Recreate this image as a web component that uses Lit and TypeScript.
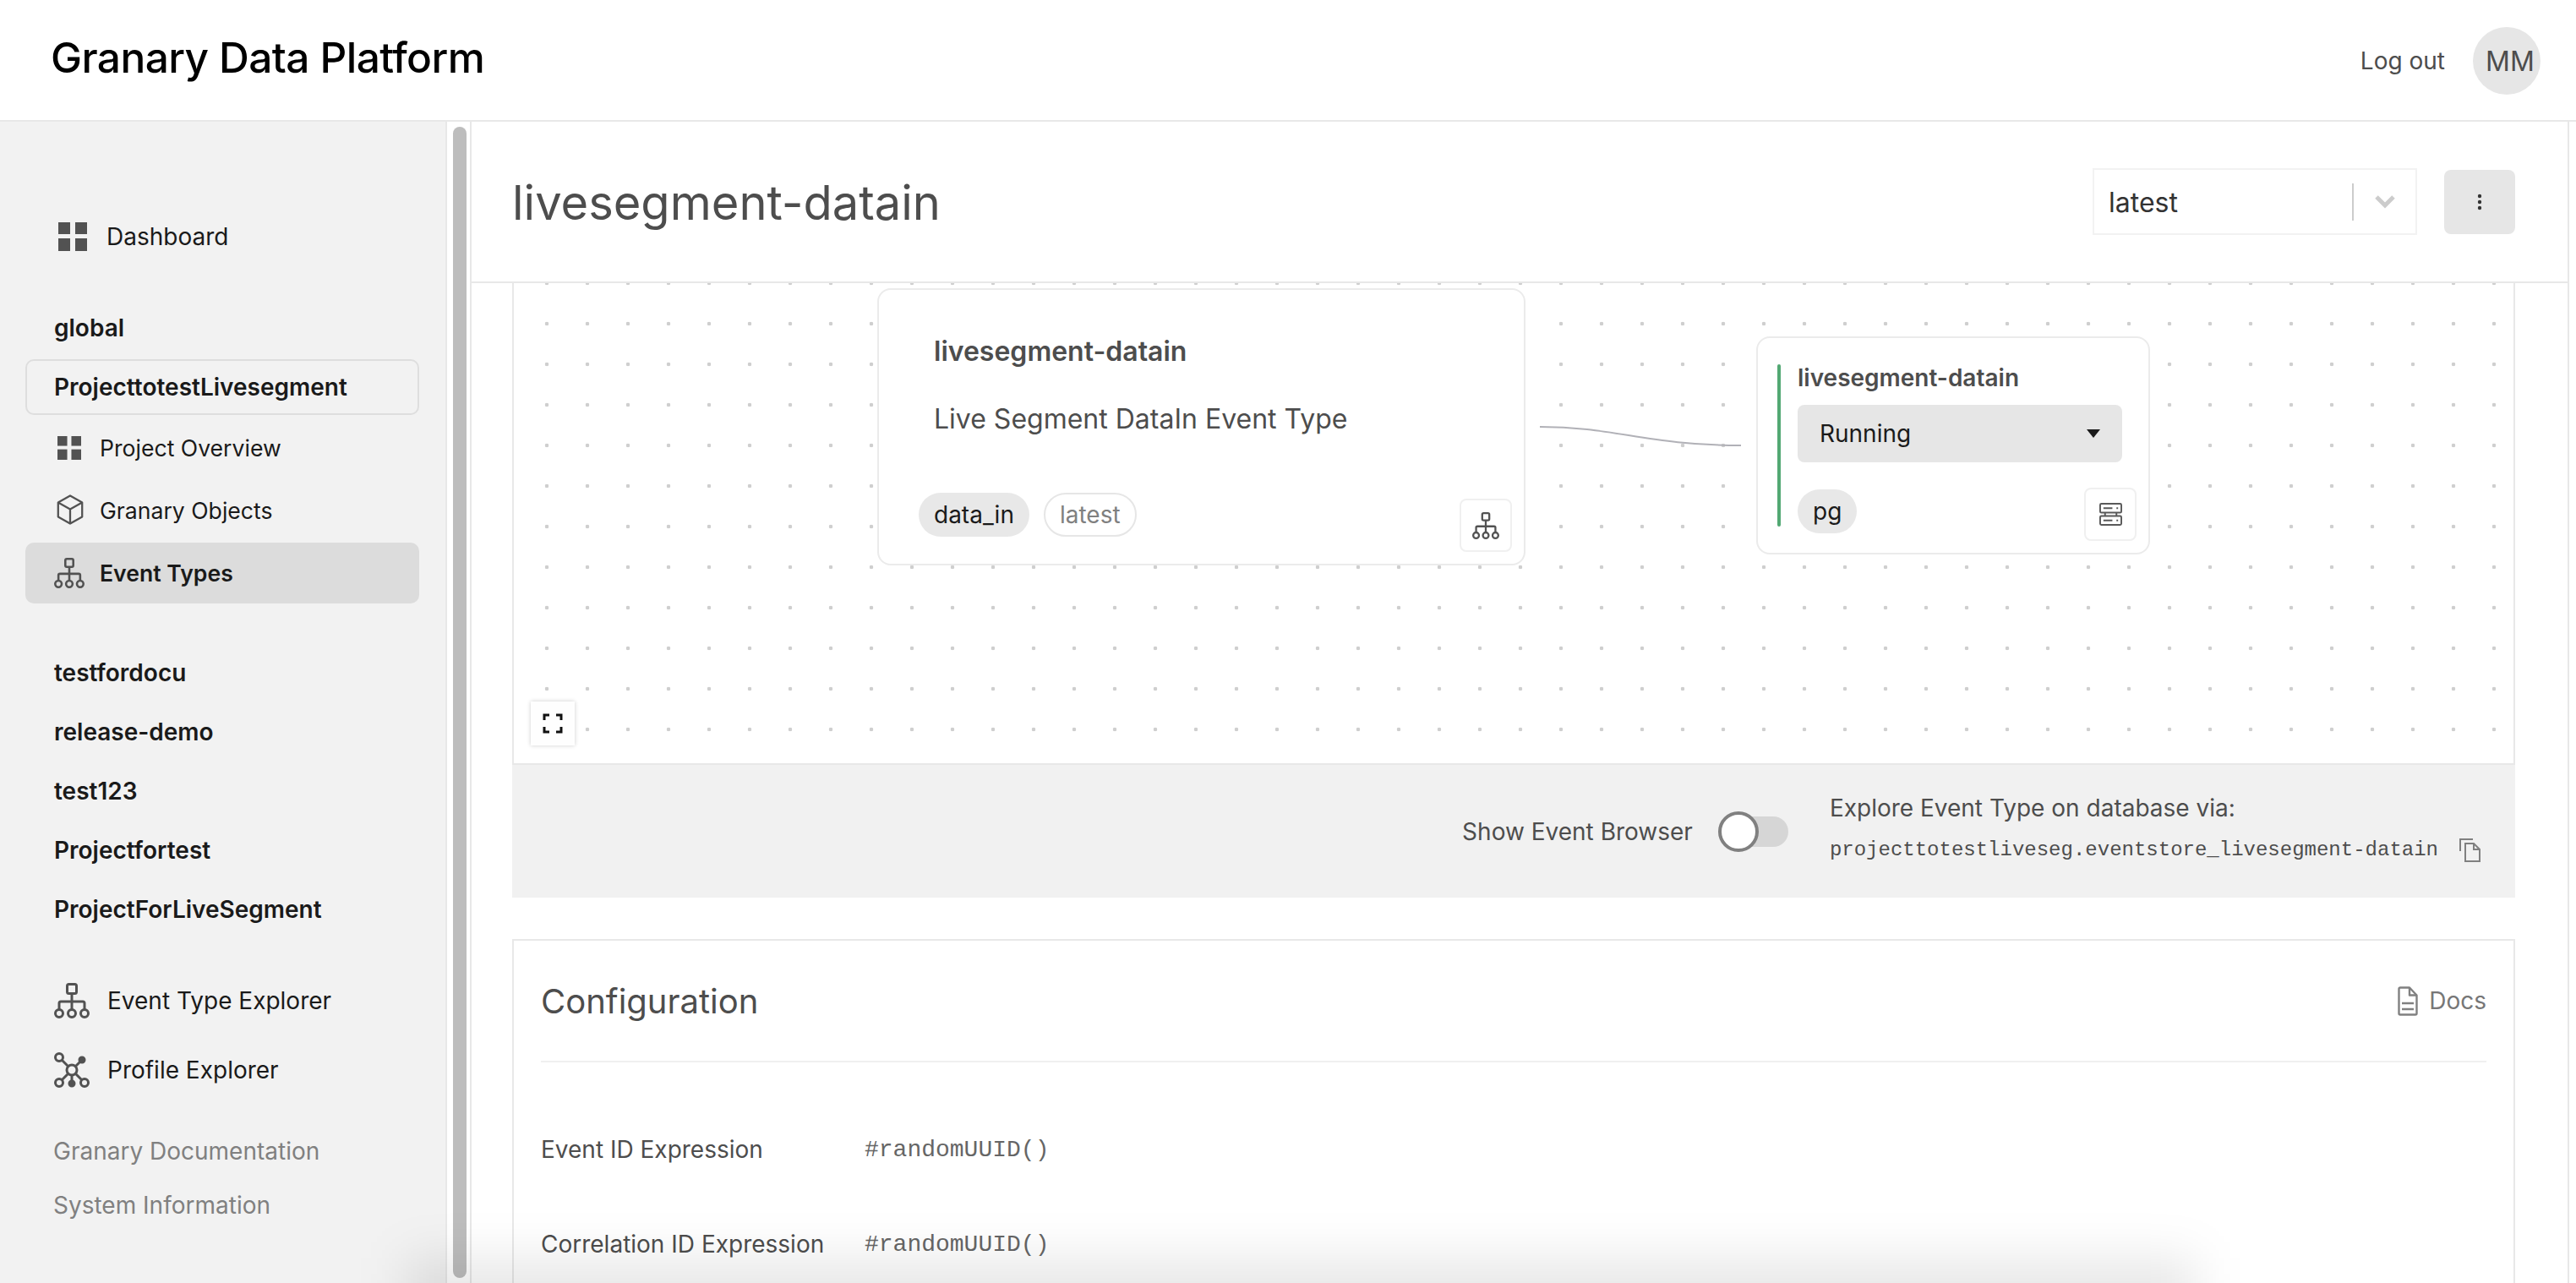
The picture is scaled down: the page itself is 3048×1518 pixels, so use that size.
import { LitElement, html, css } from 'lit';
import { customElement } from 'lit/decorators.js';

const gridIcon = html`<svg viewBox="0 0 34 34" fill="#525252"><rect x="0" y="0" width="14" height="14" /><rect x="20" y="0" width="14" height="14" /><rect x="0" y="19" width="14" height="15" /><rect x="20" y="19" width="14" height="15" /></svg>`;

const boxIcon = html`<svg viewBox="0 0 34 38" fill="none" stroke="#525252" stroke-width="2.4" stroke-linejoin="round"><path d="M17 1.500 32 10v18l-15 8.500L2 28V10z" /><path d="M2 10l15 8.500L32 10M17 18.500v18" /></svg>`;

const treeIcon = html`<svg viewBox="0 0 42 42" fill="none" stroke="#525252" stroke-width="3"><rect x="15.500" y="1.500" width="11" height="11" rx="2" /><path d="M21 13v18M6 31v-7a2 2 0 0 1 2-2h26a2 2 0 0 1 2 2v7" /><circle cx="6" cy="36" r="4.500" /><circle cx="21" cy="36" r="4.500" /><circle cx="36" cy="36" r="4.500" /></svg>`;

const profileIcon = html`<svg viewBox="0 0 42 42" fill="none" stroke="#525252" stroke-width="3"><circle cx="21" cy="21" r="6" /><circle cx="6" cy="6" r="4.500" /><circle cx="6" cy="36" r="4.500" /><circle cx="36" cy="36" r="4.500" /><circle cx="33" cy="9" r="3" fill="#525252" /><circle cx="21" cy="37" r="3" fill="#525252" /><path d="M9 9l8 8M17 25l-8 8M25 25l8 8M25 17l6-6M21 27v7" /></svg>`;

const serverIcon = html`<svg viewBox="0 0 28 28" fill="none" stroke="#595959" stroke-width="2"><rect x="1" y="1" width="26" height="11" rx="1.500" /><rect x="1" y="16" width="26" height="11" rx="1.500" /><path d="M7 12v4M21 12v4M5 6.500h11M5 21.500h11M21 6.500h2M21 21.500h2" /></svg>`;

const copyIcon = html`<svg viewBox="0 0 25 28" fill="none" stroke="#808080" stroke-width="2"><path d="M1 15V1h15" /><path d="M7 6h10l7 7v14H7z" /><path d="M17 6v7h7" /></svg>`;

const docIcon = html`<svg viewBox="0 0 24 35" fill="none" stroke="#808080" stroke-width="2.400" stroke-linejoin="round"><path d="M1.500 3a1.500 1.500 0 0 1 1.500-1.500h11l8.500 9V32a1.500 1.500 0 0 1-1.500 1.500H3A1.500 1.500 0 0 1 1.500 32z" /><path d="M14 1.500v9h8.500M5 20h14M5 27h14" /></svg>`;

@customElement('app-root')
export class AppRoot extends LitElement {
  static styles = css`
    :host {
      display: block;
      height: 1518px;
      overflow: hidden;
      position: relative;
      background: #fff;
      font-family: Inter, 'Liberation Sans', sans-serif;
      font-size: 28px;
      color: #1a1a1a;
    }
    svg {
      display: block;
    }
    .topbar {
      height: 144px;
      box-sizing: border-box;
      border-bottom: 2px solid #e8e8e8;
      display: flex;
      align-items: center;
      padding: 2px 42px 0 60px;
    }
    .brand {
      flex: 1;
      font-size: 49.6px;
      font-weight: 500;
      color: #000;
      letter-spacing: -0.6px;
      padding-bottom: 8px;
    }
    .logout {
      color: #4d4d4d;
      margin-right: 33px;
    }
    .avatar {
      width: 80px;
      height: 80px;
      border-radius: 50%;
      background: #e6e6e6;
      color: #4d4d4d;
      font-size: 32px;
      display: flex;
      align-items: center;
      justify-content: center;
      white-space: nowrap;
    }
    .avatar span {
      margin-left: 8px;
    }
    .body {
      display: flex;
      height: 1374px;
    }
    .side {
      width: 529px;
      flex: none;
      box-sizing: border-box;
      background: #f2f2f2;
      border-right: 2px solid #e8e8e8;
      padding: 118px 31px 0 30px;
    }
    .gutter {
      width: 29px;
      flex: none;
      box-sizing: border-box;
      padding: 6px 4px 6px 7px;
      border-right: 2px solid #e8e8e8;
    }
    .thumb {
      height: 100%;
      border-radius: 8px;
      background: #bdbdbd;
    }
    .row {
      display: flex;
      align-items: center;
    }
    .top-link {
      height: 36px;
      gap: 23px;
      padding-left: 39px;
    }
    .top-link svg {
      width: 34px;
      height: 34px;
    }
    .explorer {
      height: 46px;
      gap: 21px;
      padding-left: 34px;
    }
    .explorer svg {
      width: 42px;
      height: 42px;
    }
    .project {
      height: 36px;
      line-height: 36px;
      padding-left: 34px;
      font-weight: 600;
    }
    .selected {
      height: 66px;
      line-height: 62px;
      box-sizing: border-box;
      border: 2px solid #dedede;
      border-radius: 10px;
      padding-left: 32px;
      margin: 19px 0 4px;
    }
    .sub {
      height: 72px;
      gap: 18px;
      padding-left: 34px;
      margin-bottom: 2px;
      border-radius: 10px;
      font-size: 26.6px;
    }
    .sub svg {
      width: 36px;
      height: 36px;
    }
    .sub .grid {
      width: 28px;
      height: 28px;
      margin: 0 4px;
    }
    .sub .grid svg {
      width: 28px;
      height: 28px;
    }
    .sub .box {
      width: 34px;
      height: 38px;
      margin: 0 1px;
    }
    .sub.active {
      background: #dcdcdc;
      font-weight: 600;
    }
    .footer-link {
      color: #808080;
      height: 64px;
      line-height: 64px;
      padding-left: 33px;
    }
    .main {
      flex: 1;
      min-width: 0;
      padding-right: 8px;
    }
    .main-inner {
      border-right: 2px solid #e8e8e8;
      height: 100%;
    }
    .page-head {
      height: 191px;
      box-sizing: border-box;
      border-bottom: 2px solid #e8e8e8;
      display: flex;
      align-items: center;
      padding: 0 62px 0 48px;
    }
    .page-title {
      flex: 1;
      font-size: 56px;
      color: #4d4d4d;
      padding-top: 2px;
    }
    .select {
      width: 384px;
      height: 79px;
      box-sizing: border-box;
      border: 2px solid #f2f2f2;
      display: flex;
      align-items: center;
      padding-left: 17px;
      font-size: 32px;
      color: #333;
    }
    .select span {
      flex: 1;
      padding-top: 2px;
    }
    .select i {
      width: 2px;
      height: 44px;
      background: #ccc;
      margin-right: 25px;
    }
    .select svg {
      width: 24px;
      height: 16px;
      margin-right: 24px;
    }
    .more {
      width: 84px;
      height: 76px;
      margin-left: 32px;
      border-radius: 8px;
      background: #e6e6e6;
      display: flex;
      align-items: center;
      justify-content: center;
    }
    .more svg {
      width: 6px;
      height: 20px;
    }
    .content {
      padding: 0 62px 0 48px;
    }
    .canvas {
      position: relative;
      height: 570px;
      box-sizing: border-box;
      border: solid #e8e8e8;
      border-width: 0 2px 2px;
      background-color: #fff;
      background-image: radial-gradient(circle, #cfcfcf 2px, transparent 2.6px);
      background-size: 48px 48px;
      background-position: 15px 24px;
    }
    .node {
      position: absolute;
      box-sizing: border-box;
      background: #fff;
      border: 2px solid #ebebeb;
      border-radius: 16px;
    }
    .type-node {
      left: 430px;
      top: 6px;
      width: 767px;
      height: 328px;
      padding: 55px 65px 0 65px;
      color: #4d4d4d;
    }
    .node-title {
      font-weight: 600;
      font-size: 32px;
      line-height: 36px;
    }
    .node-sub {
      font-size: 32px;
      line-height: 40px;
      margin-top: 42px;
    }
    .chips {
      position: absolute;
      left: 47px;
      bottom: 32px;
      display: flex;
      gap: 17px;
    }
    .chip {
      height: 52px;
      line-height: 52px;
      padding: 0 18px;
      box-sizing: border-box;
      border-radius: 26px;
      background: #e8e8e8;
      color: #1a1a1a;
    }
    .chip.outline {
      background: #fff;
      border: 2px solid #e6e6e6;
      line-height: 48px;
      color: #808080;
      padding: 0 17px;
    }
    .node-action {
      position: absolute;
      box-sizing: border-box;
      width: 62px;
      height: 63px;
      border: 2px solid #f0f0f0;
      border-radius: 8px;
      display: flex;
      align-items: center;
      justify-content: center;
    }
    .type-node .node-action {
      right: 14px;
      bottom: 14px;
    }
    .type-node .node-action svg {
      width: 32px;
      height: 34px;
    }
    .store-node {
      left: 1470px;
      top: 63px;
      width: 466px;
      height: 258px;
      padding: 29px 31px 0 47px;
      color: #4d4d4d;
    }
    .store-node::before {
      content: '';
      position: absolute;
      left: 23px;
      top: 31px;
      width: 4px;
      height: 192px;
      border-radius: 2px;
      background: #52a873;
    }
    .store-title {
      font-weight: 600;
      font-size: 28px;
      line-height: 36px;
    }
    .status {
      height: 68px;
      margin-top: 14px;
      padding: 0 26px;
      border-radius: 8px;
      background: #e6e6e6;
      color: #1a1a1a;
      display: flex;
      align-items: center;
      justify-content: space-between;
    }
    .status svg {
      width: 16px;
      height: 10px;
    }
    .store-node .chip {
      position: absolute;
      left: 47px;
      bottom: 23px;
      padding: 0 18px;
    }
    .store-node .node-action {
      right: 14px;
      bottom: 14px;
    }
    .store-node .node-action svg {
      width: 27px;
      height: 27px;
    }
    .edge {
      position: absolute;
      left: 1212px;
      top: 165px;
      width: 245px;
      height: 30px;
      fill: none;
      stroke: #b1b1b7;
      stroke-width: 2;
    }
    .fit {
      position: absolute;
      left: 20px;
      top: 495px;
      width: 52px;
      height: 52px;
      background: #fefefe;
      box-shadow: 0 0 5px rgba(0, 0, 0, 0.2);
      display: flex;
      align-items: center;
      justify-content: center;
    }
    .fit svg {
      width: 24px;
      height: 24px;
    }
    .band {
      height: 157px;
      background: #f1f1f1;
      display: flex;
      align-items: center;
      justify-content: flex-end;
      padding-right: 41px;
      color: #4d4d4d;
    }
    .toggle {
      position: relative;
      width: 83px;
      height: 36px;
      margin: 0 49px 0 30px;
      border-radius: 18px;
      background: #d6d6d6;
    }
    .toggle::before {
      content: '';
      position: absolute;
      left: 0;
      top: -6px;
      width: 48px;
      height: 48px;
      box-sizing: border-box;
      border: 4px solid #808080;
      border-radius: 50%;
      background: #fff;
    }
    .explore {
      margin-bottom: 10px;
    }
    .explore-label {
      line-height: 36px;
    }
    .explore-value {
      display: flex;
      align-items: center;
      gap: 25px;
      margin-top: 18px;
      font-family: 'Liberation Mono', monospace;
      font-size: 24px;
      color: #4d4d4d;
    }
    .explore-value svg {
      width: 25px;
      height: 28px;
    }
    .config {
      margin-top: 49px;
      box-sizing: border-box;
      height: 500px;
      border: 2px solid #e8e8e8;
      padding: 0 32px;
      color: #4d4d4d;
    }
    .config-head {
      height: 142px;
      border-bottom: 2px solid #f0f0f0;
      display: flex;
      align-items: center;
      justify-content: space-between;
    }
    .config-title {
      font-size: 40px;
    }
    .docs {
      display: flex;
      align-items: center;
      gap: 13px;
      color: #777;
    }
    .docs svg {
      width: 24px;
      height: 35px;
    }
    .prop {
      display: flex;
      align-items: center;
      height: 36px;
      margin-top: 76px;
    }
    .config-head + .prop {
      margin-top: 85px;
    }
    .prop span {
      width: 383px;
      flex: none;
    }
    .prop code {
      font-family: 'Liberation Mono', monospace;
      font-size: 28px;
      color: #666;
    }
    .fade {
      position: absolute;
      left: 480px;
      right: 450px;
      bottom: -80px;
      height: 110px;
      background: rgba(0, 0, 0, 0.09);
      filter: blur(28px);
      pointer-events: none;
    }
  `;

  render() {
    return html`
      <div class="topbar">
        <div class="brand">Granary Data Platform</div>
        <div class="logout">Log out</div>
        <div class="avatar"><span>MM</span></div>
      </div>
      <div class="body">
        <nav class="side">
          <div class="row top-link">${gridIcon}Dashboard</div>
          <div class="project" style="margin-top:72px">global</div>
          <div class="project selected">ProjecttotestLivesegment</div>
          <div class="row sub" style="height:70px;margin-bottom:3px">
            <span class="grid">${gridIcon}</span>Project Overview
          </div>
          <div class="row sub">
            <span class="box">${boxIcon}</span>Granary Objects
          </div>
          <div class="row sub active">${treeIcon}Event Types</div>
          <div class="project" style="margin-top:64px">testfordocu</div>
          <div class="project" style="margin-top:34px">release-demo</div>
          <div class="project" style="margin-top:34px">test123</div>
          <div class="project" style="margin-top:34px">Projectfortest</div>
          <div class="project" style="margin-top:34px">ProjectForLiveSegment</div>
          <div class="row explorer" style="margin-top:67px">${treeIcon}Event Type Explorer</div>
          <div class="row explorer" style="margin-top:36px">${profileIcon}Profile Explorer</div>
          <div class="footer-link" style="margin-top:41px">Granary Documentation</div>
          <div class="footer-link">System Information</div>
        </nav>
        <div class="gutter"><div class="thumb"></div></div>
        <main class="main">
          <div class="main-inner">
            <div class="page-head">
              <div class="page-title">livesegment-datain</div>
              <div class="select">
                <span>latest</span><i></i>
                <svg viewBox="0 0 24 16" fill="none" stroke="#ccc" stroke-width="5">
                  <path d="M2 2l10 10L22 2" />
                </svg>
              </div>
              <div class="more">
                <svg viewBox="0 0 6 20" fill="#333">
                  <circle cx="3" cy="3" r="2.200" /><circle cx="3" cy="10" r="2.200" /><circle cx="3" cy="17" r="2.200" />
                </svg>
              </div>
            </div>
            <div class="content">
              <div class="canvas">
                <svg class="edge" viewBox="0 0 245 30">
                  <path d="M2 5C90 5 130 27 240 27" />
                </svg>
                <div class="node type-node">
                  <div class="node-title">livesegment-datain</div>
                  <div class="node-sub">Live Segment DataIn Event Type</div>
                  <div class="chips">
                    <div class="chip">data_in</div>
                    <div class="chip outline">latest</div>
                  </div>
                  <div class="node-action">${treeIcon}</div>
                </div>
                <div class="node store-node">
                  <div class="store-title">livesegment-datain</div>
                  <div class="status">
                    Running
                    <svg viewBox="0 0 16 10" fill="#1a1a1a"><path d="M0 0h16L8 10z" /></svg>
                  </div>
                  <div class="chip">pg</div>
                  <div class="node-action">${serverIcon}</div>
                </div>
                <div class="fit">
                  <svg viewBox="0 0 24 24" fill="none" stroke="#111" stroke-width="3">
                    <path d="M2 8V2h6M16 2h6v6M22 16v6h-6M8 22H2v-6" />
                  </svg>
                </div>
              </div>
              <div class="band">
                Show Event Browser
                <div class="toggle"></div>
                <div class="explore">
                  <div class="explore-label">Explore Event Type on database via:</div>
                  <div class="explore-value">
                    projecttotestliveseg.eventstore_livesegment-datain ${copyIcon}
                  </div>
                </div>
              </div>
              <section class="config">
                <div class="config-head">
                  <div class="config-title">Configuration</div>
                  <div class="docs">${docIcon}Docs</div>
                </div>
                <div class="prop"><span>Event ID Expression</span><code>#randomUUID()</code></div>
                <div class="prop"><span>Correlation ID Expression</span><code>#randomUUID()</code></div>
              </section>
            </div>
          </div>
        </main>
      </div>
      <div class="fade"></div>
    `;
  }
}

declare global {
  interface HTMLElementTagNameMap {
    'app-root': AppRoot;
  }
}
